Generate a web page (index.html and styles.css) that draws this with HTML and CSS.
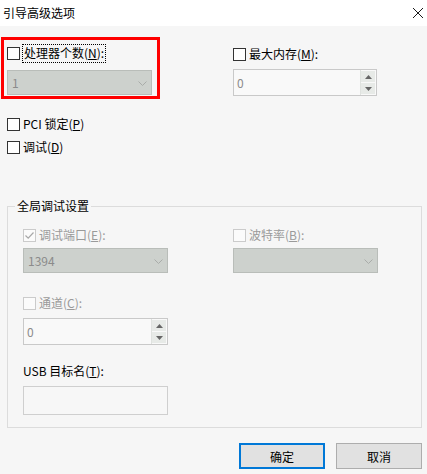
FILE: index.html
```html
<!DOCTYPE html>
<html lang="zh-CN">
<head>
<meta charset="utf-8">
<title>引导高级选项</title>
<link rel="stylesheet" href="styles.css">
</head>
<body>
<div class="window">
  <div class="titlebar">
    <span class="title">引导高级选项</span>
    <svg class="close" width="12" height="12" viewBox="0 0 12 12"><path d="M1 1 L11 11 M11 1 L1 11" stroke="#1a1a1a" stroke-width="1" fill="none"/></svg>
  </div>
  <div class="content">
    <div class="top">
      <div class="hl">
        <label class="check">
          <span class="box"></span>
          <span class="focus">处理器个数(<u>N</u>):</span>
        </label>
        <div class="combo disabled combo-cpu">
          <span class="val">1</span>
          <svg class="chev" width="9" height="5" viewBox="0 0 9 5"><path d="M0.5 0.5 L4.5 4.5 L8.5 0.5" stroke="#a9aca9" fill="none"/></svg>
        </div>
      </div>
      <div class="right-col">
        <label class="check gap3">
          <span class="box"></span>
          <span>最大内存(<u>M</u>):</span>
        </label>
        <div class="spin spin-mem">
          <span class="val">0</span>
          <div class="spin-btns">
            <span class="sb"><svg width="7" height="4" viewBox="0 0 7 4"><path d="M0 4 L3.5 0 L7 4 Z" fill="#666"/></svg></span>
            <span class="sb"><svg width="7" height="4" viewBox="0 0 7 4"><path d="M0 0 L3.5 4 L7 0 Z" fill="#666"/></svg></span>
          </div>
        </div>
      </div>
    </div>

    <div class="opts">
      <label class="check gap3"><span class="box"></span><span>PCI 锁定(<u>P</u>)</span></label>
      <label class="check gap3"><span class="box"></span><span>调试(<u>D</u>)</span></label>
    </div>

    <fieldset class="group">
      <legend>全局调试设置</legend>
      <div class="group-grid">
        <div class="cell">
          <label class="check gap3 dis">
            <span class="box checked"><svg width="11" height="11" viewBox="0 0 11 11"><path d="M1.5 5.5 L4.2 8.2 L9.5 2.5" stroke="#a8a8a8" stroke-width="1.2" fill="none"/></svg></span>
            <span>调试端口(<u>E</u>):</span>
          </label>
          <div class="combo disabled combo-g">
            <span class="val">1394</span>
            <svg class="chev" width="9" height="5" viewBox="0 0 9 5"><path d="M0.5 0.5 L4.5 4.5 L8.5 0.5" stroke="#a9aca9" fill="none"/></svg>
          </div>
        </div>
        <div class="cell">
          <label class="check gap3 dis">
            <span class="box"></span>
            <span>波特率(<u>B</u>):</span>
          </label>
          <div class="combo disabled combo-g">
            <span class="val"></span>
            <svg class="chev" width="9" height="5" viewBox="0 0 9 5"><path d="M0.5 0.5 L4.5 4.5 L8.5 0.5" stroke="#a9aca9" fill="none"/></svg>
          </div>
        </div>
        <div class="cell row2">
          <label class="check gap3 dis">
            <span class="box"></span>
            <span>通道(<u>C</u>):</span>
          </label>
          <div class="spin spin-ch">
            <span class="val">0</span>
            <div class="spin-btns">
              <span class="sb"><svg width="7" height="4" viewBox="0 0 7 4"><path d="M0 4 L3.5 0 L7 4 Z" fill="#666"/></svg></span>
              <span class="sb"><svg width="7" height="4" viewBox="0 0 7 4"><path d="M0 0 L3.5 4 L7 0 Z" fill="#666"/></svg></span>
            </div>
          </div>
        </div>
        <div class="cell row2"></div>
        <div class="cell row3">
          <div class="plain-label">USB 目标名(<u>T</u>):</div>
          <div class="textbox"></div>
        </div>
      </div>
    </fieldset>

    <div class="buttons">
      <button class="btn default">确定</button>
      <button class="btn">取消</button>
    </div>
  </div>
</div>
</body>
</html>
```

FILE: styles.css
```css
* { box-sizing: border-box; }
html, body { margin: 0; padding: 0; }
body {
  width: 427px;
  height: 474px;
  overflow: hidden;
  background: #f6f6f6;
  font-family: "Noto Sans CJK SC", "Noto Sans", sans-serif;
  font-size: 12px;
  color: #000;
}
u { text-decoration: underline; text-underline-offset: 1px; }

.titlebar {
  height: 26px;
  background: #fff;
  display: flex;
  align-items: center;
  justify-content: space-between;
  padding: 0 3px 0 3px;
}
.title { font-size: 12px; line-height: 16px; }
.close { display: block; }

.content { padding: 0 5px 0 7px; }

.top { display: flex; align-items: flex-start; margin-top: 11px; }
.hl {
  margin-left: -6px;
  width: 159px;
  border: 3px solid #ff0000;
  padding: 4px 0 1px 3px;
}
.right-col { margin-left: 73px; margin-top: 8px; }

.check {
  display: flex;
  align-items: center;
  height: 18px;
  line-height: 16px;
  gap: 2px;
  white-space: nowrap;
}
.check.gap3 { gap: 3px; }
.box {
  width: 13px;
  height: 13px;
  border: 1px solid #333;
  background: #fff;
  flex: none;
  display: flex;
  align-items: center;
  justify-content: center;
}
.dis { color: #9a9a9a; }
.dis .box { border-color: #cbcbcb; background: #fbfbfb; }
.focus {
  border: 1px dotted #000;
  height: 19px;
  padding: 0 1px;
  display: flex;
  align-items: center;
}

.combo {
  display: flex;
  align-items: center;
  justify-content: space-between;
  height: 25px;
  border: 1px solid #b9bdb9;
  background: #cdd1cd;
  color: #8b8b8b;
  padding: 0 4px 0 4px;
}
.combo-cpu { width: 145px; margin-top: 8px; }
.combo-g { width: 145px; margin-top: 4px; }
.chev { display: block; margin-top: 1px; }

.spin {
  display: flex;
  align-items: stretch;
  justify-content: space-between;
  border: 1px solid #c9c9c9;
  background: #f9f9f9;
  color: #8b8b8b;
}
.spin .val { padding-left: 3px; display: flex; align-items: center; }
.spin-mem { width: 144px; height: 27px; margin-top: 6px; }
.spin-ch { width: 145px; height: 27px; margin-top: 6px; }
.spin-btns {
  width: 16px;
  display: flex;
  flex-direction: column;
  gap: 1px;
  padding: 1px 1px 1px 0;
  border-left: 1px solid #dfe2df;
}
.sb {
  flex: 1;
  background: #e7eae7;
  display: flex;
  align-items: center;
  justify-content: center;
}
.sb svg { display: block; }

.opts {
  margin-top: 16px;
  display: flex;
  flex-direction: column;
  gap: 5px;
}

.group {
  margin: 42px 0 0 0;
  padding: 0;
  border: 1px solid #dcdcdc;
  min-width: 0;
}
.group legend {
  margin-left: 7px;
  padding: 0 2px;
  line-height: 16px;
  height: 16px;
}
.group-grid {
  display: grid;
  grid-template-columns: 145px 145px;
  column-gap: 65px;
  padding: 12px 0 12px 15px;
}
.cell.row2 { margin-top: 21px; }
.cell.row3 { margin-top: 17px; }
.plain-label { height: 18px; line-height: 18px; white-space: nowrap; }
.textbox {
  margin-top: 6px;
  width: 145px;
  height: 29px;
  border: 1px solid #cfcfcf;
  background: #f7f7f7;
}

.buttons {
  display: flex;
  justify-content: flex-end;
  gap: 11px;
  margin-top: 15px;
}
.btn {
  width: 86px;
  height: 26px;
  font-family: "Noto Sans CJK SC", "Noto Sans", sans-serif;
  font-size: 12px;
  color: #000;
  background: #e1e1e1;
  border: 1px solid #adadad;
  padding: 0;
}
.btn.default { border: 2px solid #0078d7; }
```
